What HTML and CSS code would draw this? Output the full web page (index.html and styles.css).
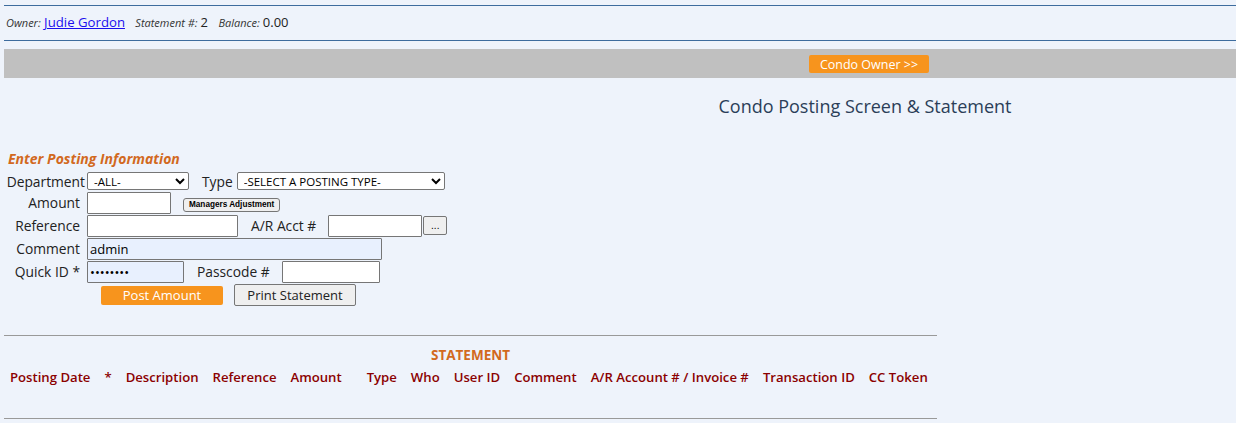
FILE: index.html
```html
<!DOCTYPE html>
<html lang="en">
<head>
  <meta charset="UTF-8">
  <title>Condo Posting Screen</title>
  <link rel="stylesheet" href="styles.css">
</head>
<body>
  <div class="ownerbar">
    <span class="cap">Owner:</span> <a href="#" class="owner">Judie Gordon</a>
    <span class="cap sp">Statement #:</span><span class="val">2</span>
    <span class="cap sp">Balance:</span><span class="val">0.00</span>
  </div>
  <div class="graybar">
    <button class="btnorange condo">Condo Owner &gt;&gt;</button>
  </div>
  <div class="title">Condo Posting Screen &amp; Statement</div>

  <div class="entry">
    <div class="entryhead">Enter Posting Information</div>
    <div class="row r1">
      <label class="lbl lbl-dept">Department</label>
      <select class="sel sel-dept"><option>-ALL-</option></select>
      <label class="lbl2 lbl-type">Type</label>
      <select class="sel sel-type"><option>-SELECT A POSTING TYPE-</option></select>
    </div>
    <div class="row">
      <label class="lbl">Amount</label>
      <input class="inp inp-amount" type="text">
      <button class="btnsmall">Managers Adjustment</button>
    </div>
    <div class="row">
      <label class="lbl">Reference</label>
      <input class="inp inp-ref" type="text">
      <label class="lbl2 lbl-ar">A/R Acct #</label>
      <input class="inp inp-ar" type="text">
      <button class="btndots">...</button>
    </div>
    <div class="row">
      <label class="lbl">Comment</label>
      <input class="inp inp-comment fill" type="text" value="admin">
    </div>
    <div class="row">
      <label class="lbl">Quick ID *</label>
      <input class="inp inp-quick fill" type="password" value="12345678">
      <label class="lbl2 lbl-pass">Passcode #</label>
      <input class="inp inp-pass" type="password">
    </div>
    <div class="row rbtn">
      <button class="btnorange post">Post Amount</button>
      <button class="btngray">Print Statement</button>
    </div>
  </div>

  <div class="statement">
    <div class="stmthead">STATEMENT</div>
    <table class="stmt">
      <tr>
        <th>Posting Date</th>
        <th>*</th>
        <th>Description</th>
        <th>Reference</th>
        <th class="wide">Amount</th>
        <th>Type</th>
        <th>Who</th>
        <th>User ID</th>
        <th>Comment</th>
        <th>A/R Account # / Invoice #</th>
        <th>Transaction ID</th>
        <th>CC Token</th>
      </tr>
    </table>
  </div>
</body>
</html>
```

FILE: styles.css
```css
body {
  margin: 0;
  background: #eef3fb;
  font-family: "Open Sans", "Liberation Sans", sans-serif;
  color: #222;
  width: 1236px;
  height: 423px;
  overflow: hidden;
}
.ownerbar {
  margin: 5px 0 0 4px;
  border-top: 1px solid #3d6c9e;
  border-bottom: 1px solid #3d6c9e;
  height: 34px;
  line-height: 33px;
  padding-left: 2px;
  font-size: 13px;
}
.cap {
  font-style: italic;
  font-size: 11px;
  color: #333;
}
.sp {
  margin-left: 7px;
}
.owner {
  color: #1a0dee;
  font-size: 13.2px;
}
.val {
  font-size: 13px;
  margin-left: 3px;
}
.graybar {
  margin: 8px 0 0 4px;
  height: 29px;
  background: #c0c0c0;
  position: relative;
}
.btnorange {
  background: #f7941d;
  color: #fff;
  border: none;
  border-radius: 2px;
  font-family: "Open Sans", "Liberation Sans", sans-serif;
  font-size: 12.5px;
  cursor: pointer;
}
.condo {
  position: absolute;
  left: 805px;
  top: 6px;
  width: 120px;
  height: 18px;
  padding: 0;
}
.title {
  text-align: center;
  padding-left: 494px;
  margin-top: 16px;
  font-size: 18px;
  color: #2b3e58;
  height: 22px;
}
.entry {
  margin-top: 30px;
  padding-left: 5px;
}
.entryhead {
  padding-left: 3px;
  color: #d2691e;
  font-weight: 700;
  font-style: italic;
  font-size: 14px;
  height: 25px;
  line-height: 26px;
}
.row {
  display: flex;
  align-items: center;
  height: 23px;
  font-size: 13.8px;
}
.r1 {
  height: 20px;
}
.lbl {
  width: 75px;
  text-align: right;
  padding-right: 7px;
}
.lbl-dept {
  width: 80px;
  padding-right: 2px;
}
.lbl2 {
  padding: 0 4px;
}
.lbl-type {
  margin-left: 9px;
}
.lbl-ar {
  margin-left: 9px;
  margin-right: 8px;
}
.lbl-pass {
  margin-left: 9px;
  margin-right: 8px;
}
.sel {
  height: 18px;
  font-size: 11.5px;
  font-family: "Open Sans", "Liberation Sans", sans-serif;
  border: 1px solid #767676;
  border-radius: 2px;
  background: #fff;
  padding: 0 0 0 2px;
}
.sel-dept {
  width: 102px;
}
.sel-type {
  width: 208px;
}
.inp {
  height: 22px;
  box-sizing: border-box;
  border: 1px solid #767676;
  border-radius: 1px;
  background: #fff;
  font-family: "Open Sans", "Liberation Sans", sans-serif;
  font-size: 13px;
  padding: 0 2px;
}
.fill {
  background: #e8f0fe;
}
.inp-amount { width: 84px; }
.inp-ref { width: 151px; }
.inp-ar { width: 94px; }
.inp-comment { width: 295px; }
.inp-quick { width: 97px; }
.inp-pass { width: 98px; }
.btnsmall {
  margin-left: 12px;
  margin-top: 5px;
  height: 14px;
  padding: 0 5px;
  font-family: "Liberation Sans", sans-serif;
  font-size: 8.2px;
  font-weight: 700;
  border: 1px solid #767676;
  border-radius: 3px;
  background: #efefef;
  line-height: 12px;
}
.btndots {
  width: 24px;
  height: 19px;
  margin-left: 1px;
  padding: 0;
  font-size: 10px;
  border: 1px solid #767676;
  border-radius: 2px;
  background: #efefef;
  line-height: 12px;
}
.rbtn {
  margin-top: 1px;
  height: 22px;
}
.post {
  margin-left: 96px;
  width: 122px;
  height: 19px;
  font-size: 13px;
  padding: 0;
}
.btngray {
  margin-left: 11px;
  width: 122px;
  height: 22px;
  padding: 0;
  font-family: "Open Sans", "Liberation Sans", sans-serif;
  font-size: 13px;
  color: #222;
  border: 1px solid #767676;
  border-radius: 2px;
  background: #efefef;
}
.statement {
  margin: 29px 0 0 4px;
  width: 933px;
  border-top: 1px solid #999;
  border-bottom: 1px solid #999;
  height: 82px;
}
.stmthead {
  text-align: center;
  margin-top: 10px;
  color: #d2691e;
  font-weight: 700;
  font-size: 13.5px;
  height: 16px;
}
.stmt {
  border-collapse: collapse;
  margin-left: -1px;
  margin-top: 6px;
}
.stmt th {
  padding: 0 7px;
  color: #8b0000;
  font-weight: 600;
  font-size: 13.15px;
  text-align: left;
  white-space: nowrap;
}
.stmt th.wide {
  padding-right: 18px;
}
```
